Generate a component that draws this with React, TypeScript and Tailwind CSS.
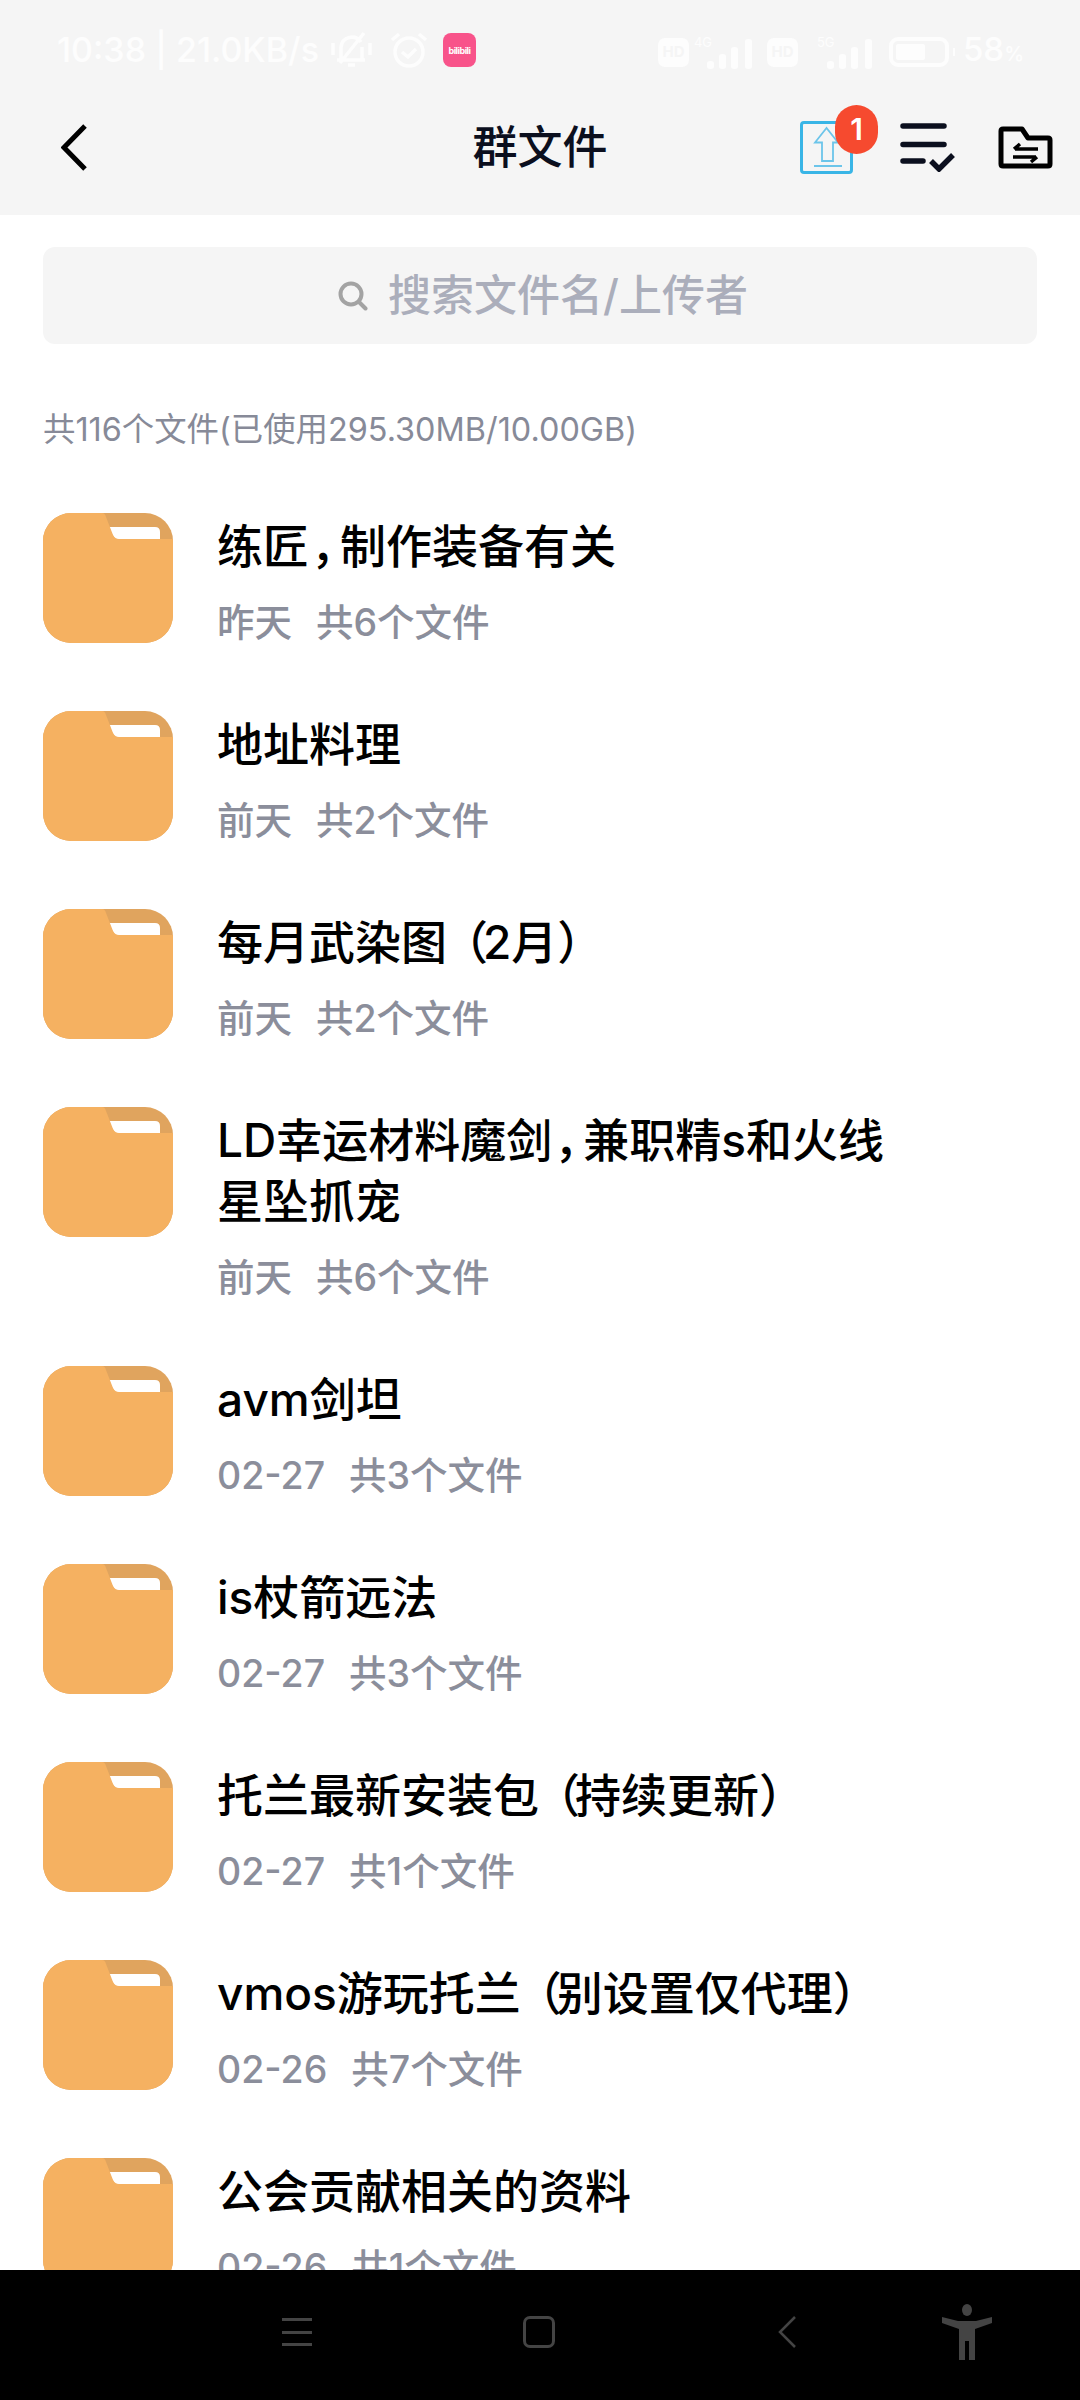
const folders = [
  { name: ["练匠，制作装备有关"], date: "昨天", count: "共6个文件" },
  { name: ["地址料理"], date: "前天", count: "共2个文件" },
  { name: ["每月武染图（2月）"], date: "前天", count: "共2个文件" },
  { name: ["LD幸运材料魔剑，兼职精s和火线", "星坠抓宠"], date: "前天", count: "共6个文件" },
  { name: ["avm剑坦"], date: "02-27", count: "共3个文件" },
  { name: ["is杖箭远法"], date: "02-27", count: "共3个文件" },
  { name: ["托兰最新安装包（持续更新）"], date: "02-27", count: "共1个文件" },
  { name: ["vmos游玩托兰（别设置仅代理）"], date: "02-26", count: "共7个文件" },
  { name: ["公会贡献相关的资料"], date: "02-26", count: "共1个文件" },
];

// the reference font sets full-width punctuation tighter than Noto does
function punctuationClass(part: string) {
  if (part === "，") return "ml-[2px] tracking-[-17px]";
  if (part === "）") return "tracking-[-10px]";
  if (part.endsWith("（")) return "tracking-[-5px]";
  return "";
}

function FolderIcon() {
  return (
    <svg viewBox="0 0 130 130" className="h-[130px] w-[130px] shrink-0">
      <rect width="130" height="130" rx="28" fill="#e0a45e" />
      <path d="M65 14H112Q117 14 117 19V26H72Z" fill="#fff" />
      <path
        d="M28 0H59Q62 0 63 4L70 22Q72 26 76 26H130V102A28 28 0 0 1 102 130H28A28 28 0 0 1 0 102V28A28 28 0 0 1 28 0Z"
        fill="#f5b161"
      />
    </svg>
  );
}

function Signal({ className }: { className: string }) {
  return (
    <svg viewBox="0 0 48 30" className={className} fill="#fdfdfd">
      <rect x="0" y="22" width="7" height="8" rx="3" />
      <rect x="12" y="15" width="7" height="15" rx="3" />
      <rect x="24" y="8" width="7" height="22" rx="3" />
      <rect x="38" y="0" width="7" height="30" rx="3" />
    </svg>
  );
}

function StatusBar() {
  return (
    <div className="flex h-[80px] items-start justify-between pl-[57px] pr-[56px] pt-[31px] text-[#fdfdfd]">
      <div className="flex items-center">
        <span className="text-[34px] leading-[38px] font-medium whitespace-pre">10:38 | 21.0KB/s</span>
        <svg viewBox="0 0 42 38" className="ml-[12px] h-[38px] w-[42px]" fill="none" stroke="#fdfdfd" strokeWidth="3.5">
          <path d="M10 28V16a11 11 0 0 1 20-5M31 16v12M6 29h28M17 34h7M33 2 9 32M2 12v12M39 12v12" />
        </svg>
        <svg viewBox="0 0 40 38" className="ml-[16px] h-[38px] w-[40px]" fill="none" stroke="#fdfdfd" strokeWidth="3.5">
          <circle cx="20" cy="21" r="14" />
          <path d="M13 21l6 5 8-8M3 9l7-6M37 9l-7-6" />
        </svg>
        <div className="ml-[14px] flex h-[34px] w-[33px] items-center justify-center rounded-[8px] bg-[#f8538a] text-[9px] leading-none font-bold tracking-[-0.5px] text-white">
          bilibili
        </div>
      </div>
      <div className="flex items-center">
        <div className="flex h-[29px] w-[31px] items-center justify-center rounded-[7px] bg-[#fdfdfd] text-[15px] font-bold text-[#f5f5f5]">HD</div>
        <div className="relative ml-[18px] h-[33px] w-[48px]">
          <span className="absolute top-0 -left-[13px] text-[13px] leading-[13px]">4G</span>
          <Signal className="absolute bottom-0 left-0 h-[30px] w-[48px]" />
        </div>
        <div className="ml-[12px] flex h-[29px] w-[31px] items-center justify-center rounded-[7px] bg-[#fdfdfd] text-[15px] font-bold text-[#f5f5f5]">HD</div>
        <div className="relative ml-[14px] h-[33px] w-[63px]">
          <span className="absolute top-0 left-[5px] text-[13px] leading-[13px]">5G</span>
          <Signal className="absolute bottom-0 left-[15px] h-[30px] w-[48px]" />
        </div>
        <div className="ml-[14px] flex h-[30px] w-[60px] items-center rounded-[9px] border-[4px] border-[#fdfdfd] p-[3px]">
          <div className="h-full w-[29px] rounded-[2px] bg-[#fdfdfd]" />
        </div>
        <div className="ml-[4px] h-[8px] w-[2px] bg-[#fdfdfd]" />
        <span className="ml-[8px] text-[33px] leading-[37px] font-medium">
          58<span className="text-[20px]">%</span>
        </span>
      </div>
    </div>
  );
}

function Header() {
  return (
    <div className="grid h-[135px] grid-cols-[1fr_auto_1fr] items-center">
      <div className="flex pl-[61px]">
        <svg viewBox="0 0 26 47" className="h-[47px] w-[26px]" fill="none" stroke="#000" strokeWidth="5">
          <path d="M24 2 3 23.5 24 45" />
        </svg>
      </div>
      <div className="text-center text-[45px] leading-none font-medium text-[#0b0f1e]">群文件</div>
      <div className="flex items-center justify-end pr-[27px]">
        <div className="relative h-[53px] w-[53px] rounded-[4px] border-[3px] border-[#39b5e6]">
          <svg viewBox="0 0 47 47" className="h-[47px] w-[47px]" fill="none" stroke="#6cc5ea" strokeWidth="1.8">
            <path d="M23.5 4 12 18.5h7V37h11V18.5h5ZM11 42h28" />
          </svg>
          <div className="absolute -top-[19px] left-[32px] flex h-[49px] w-[43px] items-center justify-center rounded-full bg-[#f64a2f] text-[30px] font-semibold text-white">
            1
          </div>
        </div>
        <svg viewBox="0 0 55 49" className="ml-[47px] h-[49px] w-[55px]" fill="none" stroke="#0b0f1e" strokeWidth="5.5" strokeLinecap="round">
          <path d="M3 3h41M3 21.5h41M3 38h20" />
          <path d="M31 38l8 8 14-14" strokeWidth="5.5" strokeLinecap="butt" />
        </svg>
        <svg viewBox="0 0 55 43" className="ml-[43px] h-[43px] w-[55px]" fill="none" stroke="#000" strokeWidth="5" strokeLinejoin="round">
          <path d="M3 5Q3 3 5 3H24L30 12H50Q52 12 52 14V38Q52 40 50 40H5Q3 40 3 38Z" />
          <path d="M17 23h23M22 18l-6 5M38 31H15M33 36l6-5" strokeWidth="3.5" />
        </svg>
      </div>
    </div>
  );
}

function FolderRow({ item }: { item: (typeof folders)[number] }) {
  return (
    <div className="flex gap-[44px] pb-[63px]">
      <FolderIcon />
      <div className="pt-[3px]">
        {item.name.map((line) => (
          <div key={line} className="text-[46px] leading-[61px] font-medium whitespace-nowrap text-black">
            {line.split(/(.?（|[，）])/).map((part, i) => (
              <span key={i} className={punctuationClass(part)}>
                {part}
              </span>
            ))}
          </div>
        ))}
        <div className="mt-[21px] flex gap-[24px] text-[37.5px] leading-[50px] font-medium text-[#8b8e9b]">
          <span>{item.date}</span>
          <span>{item.count}</span>
        </div>
      </div>
    </div>
  );
}

function NavBar() {
  return (
    <div className="flex h-[130px] shrink-0 items-center bg-black pb-[6px] pl-[282px]">
      <div className="flex h-[28px] w-[30px] flex-col justify-between">
        <div className="h-[3px] bg-[#444]" />
        <div className="h-[3px] bg-[#444]" />
        <div className="h-[3px] bg-[#444]" />
      </div>
      <div className="ml-[211px] h-[32px] w-[32px] rounded-[7px] border-[3px] border-[#444]" />
      <svg viewBox="0 0 18 32" className="ml-[223px] h-[32px] w-[18px]" fill="none" stroke="#444" strokeWidth="2.5">
        <path d="M17 1 2 16l15 15" />
      </svg>
      <svg viewBox="0 0 50 56" className="ml-[146px] h-[56px] w-[50px]" fill="#444">
        <ellipse cx="25" cy="6" rx="5" ry="6" />
        <path d="M0 13 16 17H34L50 13V19L33 25V56H27V37H23V56H17V25L0 19Z" />
      </svg>
    </div>
  );
}

export default function App() {
  return (
    <div className="flex h-[2400px] w-[1080px] flex-col overflow-hidden bg-white font-['Inter','Noto_Sans_CJK_SC',sans-serif]">
      <div className="shrink-0 bg-[#f5f5f5]">
        <StatusBar />
        <Header />
      </div>
      <div className="min-h-0 flex-1 overflow-hidden px-[43px] pt-[32px]">
        <div className="flex h-[97px] items-center justify-center rounded-[12px] bg-[#f5f5f5] pl-[6px]">
          <svg viewBox="0 0 30 30" className="mr-[20px] h-[30px] w-[30px]" fill="none" stroke="#a3a3a3" strokeWidth="4" strokeLinecap="round">
            <circle cx="13" cy="13" r="10.5" />
            <path d="m21 21 6.5 6.5" />
          </svg>
          <span className="text-[43px] leading-none font-medium text-[#abaebb]">搜索文件名/上传者</span>
        </div>
        <div className="mt-[64px] mb-[61px] text-[32.4px] leading-[44px] text-[#878a98]">
          共116个文件(已使用295.30MB/10.00GB)
        </div>
        {folders.map((item) => (
          <FolderRow key={item.name[0]} item={item} />
        ))}
      </div>
      <NavBar />
    </div>
  );
}
